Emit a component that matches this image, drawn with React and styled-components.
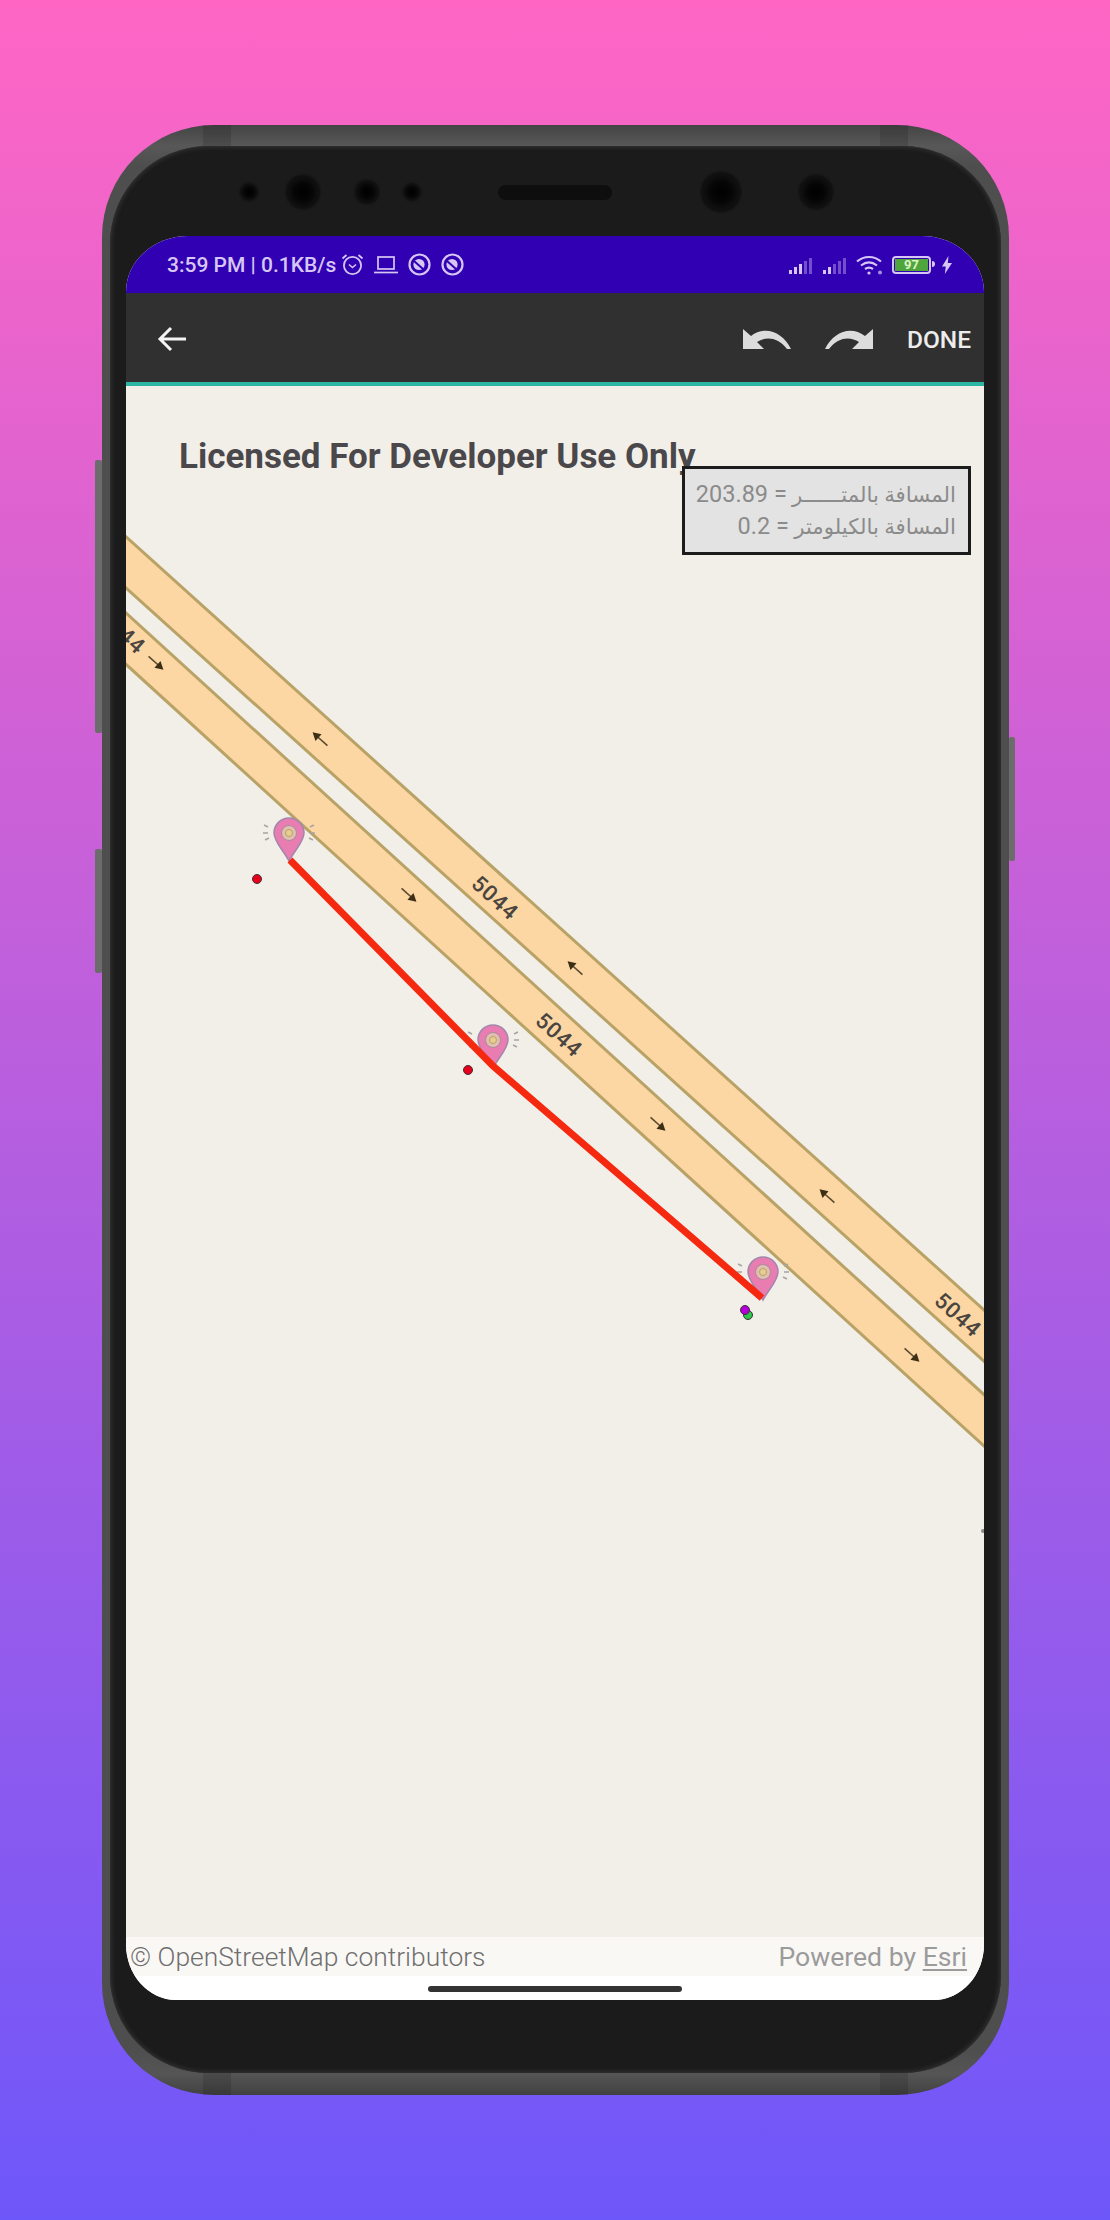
import React from "react";
import styled, { createGlobalStyle } from "styled-components";

const GlobalStyle = createGlobalStyle`
  html, body {
    margin: 0;
    padding: 0;
  }
  body {
    font-family: Roboto, "Liberation Sans", sans-serif;
  }
`;

const Page = styled.div`
  width: 1110px;
  height: 2220px;
  box-sizing: border-box;
  padding: 125px 0 0 102px;
  overflow: hidden;
  background: linear-gradient(180deg, #ff66c4 0%, #6e57fa 100%);
`;

const Frame = styled.div`
  position: relative;
  width: 907px;
  height: 1970px;
  box-sizing: border-box;
  padding: 21px 8px 22px;
  border-radius: 112px;
  background: linear-gradient(
    180deg,
    #444 0,
    #585858 21px,
    #4e4e4e 40px,
    #4e4e4e 1925px,
    #555 1949px,
    #414141 100%
  );
`;

const SideButton = styled.div`
  position: absolute;
  top: ${(p) => p.$top}px;
  ${(p) => (p.$right ? "right: -6px;" : "left: -7px;")}
  width: ${(p) => (p.$right ? 6 : 7)}px;
  height: ${(p) => p.$height}px;
  background: #6c6c6c;
  border-radius: 2px;
`;

const Band = styled.div`
  position: absolute;
  left: ${(p) => p.$left}px;
  ${(p) => (p.$bottom ? "bottom: 0;" : "top: 0;")}
  width: 28px;
  height: ${(p) => (p.$bottom ? 22 : 21)}px;
  background: rgba(0, 0, 0, 0.12);
`;

const Bezel = styled.div`
  height: 1927px;
  padding: 0 17px 0 16px;
  border-radius: 98px;
  background: #1b1b1b;
  box-shadow: inset 0 0 5px 1px #383838;
`;

const SensorRow = styled.div`
  height: 90px;
  box-sizing: border-box;
  padding: 2px 0 0 114px;
  display: flex;
  align-items: center;
`;

const Sensor = styled.div`
  flex: none;
  width: ${(p) => p.$size}px;
  height: ${(p) => p.$size}px;
  margin-left: ${(p) => p.$gap}px;
  border-radius: 50%;
  background: radial-gradient(circle at 50% 50%, #000 0, #050505 35%, #0f0f0f 60%, #141414 100%);
  box-shadow: 0 0 2px #0c0c0c;
`;

const Speaker = styled.div`
  flex: none;
  width: 114px;
  height: 15px;
  margin-left: 77px;
  border-radius: 8px;
  background: #0e0e0e;
`;

const Screen = styled.div`
  height: 1764px;
  display: flex;
  flex-direction: column;
  overflow: hidden;
  border-radius: 62px 62px 50px 50px / 56px 56px 56px 56px;
  background: #fff;
`;

const StatusBar = styled.div`
  flex: none;
  height: 57px;
  box-sizing: border-box;
  padding: 0 32px 0 41px;
  display: flex;
  align-items: center;
  justify-content: space-between;
  background: #3200b3;
  color: #d6c6f4;
`;

const StatusGroup = styled.div`
  display: flex;
  align-items: center;
  gap: ${(p) => p.$gap}px;
`;

const Clock = styled.span`
  font-size: 21px;
  font-weight: 500;
  white-space: nowrap;
  margin-right: -5px;
`;

const Battery = styled.div`
  position: relative;
  width: 33px;
  height: 12px;
  margin-right: 3px;
  padding: 1px;
  border: 2px solid #d6c6f4;
  border-radius: 4px;
  display: flex;
  align-items: stretch;
  box-sizing: content-box;
  &::after {
    content: "";
    position: absolute;
    right: -6px;
    top: 3px;
    width: 3px;
    height: 6px;
    border-radius: 0 3px 3px 0;
    background: #d6c6f4;
  }
`;

const BatteryFill = styled.div`
  flex: 1;
  background: #4fa63c;
  color: #dff3c8;
  font-size: 13px;
  font-weight: 700;
  line-height: 12px;
  text-align: center;
`;

const Toolbar = styled.div`
  flex: none;
  height: 86px;
  box-sizing: content-box;
  padding: 3px 13px 0 31px;
  display: flex;
  align-items: center;
  justify-content: space-between;
  background: #303030;
  border-bottom: 4px solid #2bb5a4;
`;

const ToolbarActions = styled.div`
  display: flex;
  align-items: center;
  gap: 34px;
`;

const DoneButton = styled.span`
  font-size: 24.5px;
  font-weight: 500;
  color: #ededed;
`;

const FlipSvg = styled.svg`
  display: block;
  transform: ${(p) => (p.$flip ? "scaleX(-1)" : "none")};
`;

const MapArea = styled.div`
  position: relative;
  flex: 1;
  overflow: hidden;
  background: #f2efe9;
`;

const MapSvg = styled.svg`
  position: absolute;
  inset: 0;
  display: block;
`;

const Watermark = styled.div`
  position: absolute;
  left: 53px;
  top: 52px;
  font-size: 35px;
  line-height: 38px;
  font-weight: 700;
  color: #4a484a;
  white-space: nowrap;
`;

const DistanceBox = styled.div`
  position: absolute;
  top: 80px;
  right: 13px;
  width: 289px;
  height: 89px;
  box-sizing: border-box;
  padding: 10px 12px 0 0;
  border: 3px solid #1c1c1c;
  background: #e3e3e3;
  color: #8b8b8b;
  font-family: Roboto, "DejaVu Sans", sans-serif;
  font-size: 21.3px;
  line-height: 32px;
  direction: rtl;
  text-align: right;
  white-space: nowrap;
`;

const DistanceValue = styled.span`
  font-size: 23.5px;
  line-height: 1;
`;

const Attribution = styled.div`
  flex: none;
  height: 39px;
  padding: 0 17px 0 4px;
  display: flex;
  align-items: center;
  justify-content: space-between;
  background: #faf8f5;
  font-size: 26.4px;
  font-weight: 300;
  color: #6f6f6f;
`;

const Powered = styled.span`
  font-weight: 400;
  font-size: 26.6px;
  color: #9b9b9b;
  & u {
    text-underline-offset: 3px;
  }
`;

const HomeArea = styled.div`
  flex: none;
  height: 24px;
  box-sizing: border-box;
  padding-top: 10px;
  background: #fff;
  display: flex;
  justify-content: center;
  align-items: flex-start;
`;

const HomeBar = styled.div`
  width: 254px;
  height: 6px;
  border-radius: 3px;
  background: #333;
`;

const Signal = ({ lit }) => (
  <svg width="26" height="18" viewBox="0 0 26 18">
    {[0, 1, 2, 3, 4].map((i) => (
      <rect
        key={i}
        x={1 + i * 5}
        y={14 - i * 3}
        width="3"
        height={4 + i * 3}
        fill="currentColor"
        opacity={i < lit ? 1 : 0.4}
      />
    ))}
  </svg>
);

const Swirl = () => (
  <svg width="23" height="23" viewBox="0 0 23 23" fill="none" stroke="currentColor">
    <circle cx="11.5" cy="11.5" r="10" strokeWidth="2.2" />
    <circle cx="11" cy="11.5" r="5.6" fill="currentColor" stroke="none" />
    <path d="M6 8l9 8" stroke="#3200b3" strokeWidth="2" />
  </svg>
);

const Arrow = ({ x, y, back }) => (
  <g transform={`translate(${x} ${y}) rotate(${back ? 222 : 42})`}>
    <path d="M-10 0H3" stroke="#5a4a30" strokeWidth="1.6" />
    <path d="M2-4.5L10 0 2 4.5z" fill="#3d2e16" />
  </g>
);

const RoadLabel = ({ x, y }) => (
  <text
    transform={`translate(${x} ${y}) rotate(42)`}
    textAnchor="middle"
    dominantBaseline="central"
    fontFamily="Roboto, sans-serif"
    fontSize="22"
    fontWeight="500"
    letterSpacing="1"
    fill="#4a4540"
  >
    5044
  </text>
);

const Pin = ({ x, y }) => (
  <g transform={`translate(${x} ${y})`}>
    <path
      d="M-25-8l4 2M-26 0h5M-24 7l4-2M25-8l-4 2M26 0h-5M24 7l-4-2"
      stroke="#a5a5a5"
      strokeWidth="1.5"
    />
    <path
      d="M-15 0A15 15 0 1 1 15 0C15 9 5 18 0 28C-5 18-15 9-15 0Z"
      fill="#e97cb0"
      stroke="#a287ad"
      strokeWidth="1.5"
    />
    <circle r="7.5" fill="#e2bfae" stroke="#a58ca0" />
    <circle r="3.5" fill="#e8cf8e" stroke="#b9a170" />
  </g>
);

const Dot = ({ x, y, fill = "#e8001a" }) => (
  <circle cx={x} cy={y} r="4.5" fill={fill} stroke="#40303a" strokeWidth="1" />
);

const Road = ({ d }) => (
  <>
    <path d={d} fill="none" stroke="#b9a266" strokeWidth="41" />
    <path d={d} fill="none" stroke="#fcd6a3" strokeWidth="35" />
  </>
);

function App() {
  return (
    <Page>
      <GlobalStyle />
      <Frame>
        <SideButton $top={335} $height={273} />
        <SideButton $top={724} $height={124} />
        <SideButton $right $top={612} $height={124} />
        <Band $left={101} />
        <Band $left={778} />
        <Band $left={101} $bottom />
        <Band $left={778} $bottom />
        <Bezel>
          <SensorRow>
            <Sensor $size={18} $gap={0} />
            <Sensor $size={34} $gap={28} />
            <Sensor $size={24} $gap={35} />
            <Sensor $size={18} $gap={24} />
            <Speaker />
            <Sensor $size={40} $gap={89} />
            <Sensor $size={34} $gap={58} />
          </SensorRow>
          <Screen>
            <StatusBar>
              <StatusGroup $gap={10}>
                <Clock>3:59 PM | 0.1KB/s</Clock>
                <svg width="23" height="23" viewBox="0 0 23 23" fill="none" stroke="currentColor" strokeWidth="1.8">
                  <circle cx="11.5" cy="12.5" r="8.6" />
                  <path d="M1.5 5.5l4-3.5M21.5 5.5l-4-3.5" />
                  <path d="M8 11.5l3.5 3 3.5-3" strokeWidth="1.6" />
                </svg>
                <svg width="24" height="20" viewBox="0 0 24 20" fill="none" stroke="currentColor" strokeWidth="1.7">
                  <rect x="4" y="2" width="16" height="12" />
                  <path d="M0 17.5h24" />
                </svg>
                <Swirl />
                <Swirl />
              </StatusGroup>
              <StatusGroup $gap={8}>
                <Signal lit={3} />
                <Signal lit={2} />
                <svg width="28" height="20" viewBox="0 0 28 20" fill="none" stroke="currentColor" strokeWidth="2.2">
                  <path d="M1 6.5c7-6 17-6 24 0" />
                  <path d="M5 10.5c5-4 11-4 16 0" />
                  <path d="M9 14c3-2 5-2 8 0" />
                  <circle cx="13" cy="18" r="1.6" fill="currentColor" stroke="none" />
                  <circle cx="24" cy="17.5" r="2" fill="currentColor" stroke="none" opacity="0.7" />
                </svg>
                <Battery>
                  <BatteryFill>97</BatteryFill>
                </Battery>
                <svg width="10" height="18" viewBox="0 0 10 18">
                  <path d="M6.5 0L0 10.5h3.8L2.8 18 10 7H5.8z" fill="currentColor" />
                </svg>
              </StatusGroup>
            </StatusBar>
            <Toolbar>
              <svg width="30" height="26" viewBox="0 0 30 26" fill="none" stroke="#f4f4f4" strokeWidth="3">
                <path d="M29 13H3M14 2L3 13l11 11" />
              </svg>
              <ToolbarActions>
                <FlipSvg width="48" height="21" viewBox="0 0 48 21">
                  <path
                    d="M0 0v20h21l-7-7c9-6 21-5 30 7h4C40 3 22-4 8 7z"
                    fill="#dcdcdc"
                  />
                </FlipSvg>
                <FlipSvg $flip width="48" height="21" viewBox="0 0 48 21">
                  <path
                    d="M0 0v20h21l-7-7c9-6 21-5 30 7h4C40 3 22-4 8 7z"
                    fill="#dcdcdc"
                  />
                </FlipSvg>
                <DoneButton>DONE</DoneButton>
              </ToolbarActions>
            </Toolbar>
            <MapArea>
              <MapSvg width="858" height="1551" viewBox="126 386 858 1551">
                <Road d="M100 539L1010 1359" />
                <Road d="M100 615L1010 1444" />
                <RoadLabel x={495} y={898} />
                <RoadLabel x={559} y={1035} />
                <RoadLabel x={958} y={1315} />
                <RoadLabel x={122} y={632} />
                <Arrow x={320} y={739} back />
                <Arrow x={575} y={968} back />
                <Arrow x={827} y={1196} back />
                <Arrow x={156} y={663} />
                <Arrow x={409} y={895} />
                <Arrow x={658} y={1124} />
                <Arrow x={912} y={1355} />
                <Pin x={289} y={833} />
                <Pin x={493} y={1040} />
                <Pin x={763} y={1272} />
                <path
                  d="M290 860L493 1066L762 1298"
                  fill="none"
                  stroke="#f5290f"
                  strokeWidth="7"
                />
                <Dot x={257} y={879} />
                <Dot x={468} y={1070} />
                <Dot x={748} y={1315} fill="#2fc44a" />
                <Dot x={745} y={1310} fill="#b300d6" />
                <circle cx="983" cy="1531" r="2" fill="#8b8b8b" />
              </MapSvg>
              <Watermark>Licensed For Developer Use Only</Watermark>
              <DistanceBox>
                <div>
                  المسافة بالمتــــــر <DistanceValue>= 203.89</DistanceValue>
                </div>
                <div>
                  المسافة بالكيلومتر <DistanceValue>= 0.2</DistanceValue>
                </div>
              </DistanceBox>
            </MapArea>
            <Attribution>
              <span>© OpenStreetMap contributors</span>
              <Powered>
                Powered by <u>Esri</u>
              </Powered>
            </Attribution>
            <HomeArea>
              <HomeBar />
            </HomeArea>
          </Screen>
        </Bezel>
      </Frame>
    </Page>
  );
}

export default App;
